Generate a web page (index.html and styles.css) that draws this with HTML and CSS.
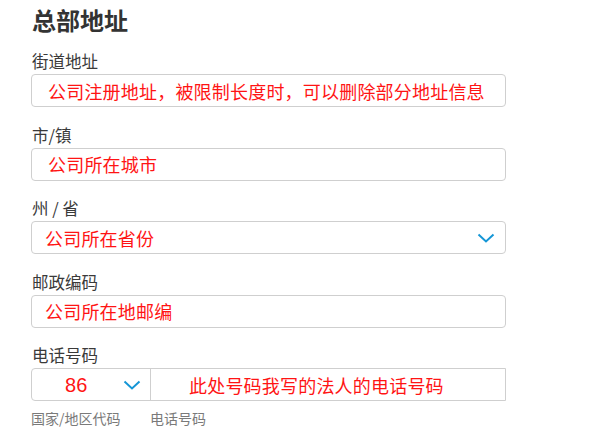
FILE: index.html
```html
<!DOCTYPE html>
<html lang="zh-CN">
<head>
<meta charset="utf-8">
<link rel="stylesheet" href="styles.css">
</head>
<body>
<div class="form">
  <h1 class="title">总部地址</h1>

  <div class="group">
    <div class="label">街道地址</div>
    <div class="box pad16"><span class="val">公司注册地址，被限制长度时，可以删除部分地址信息</span></div>
  </div>

  <div class="group">
    <div class="label">市/镇</div>
    <div class="box pad16"><span class="val">公司所在城市</span></div>
  </div>

  <div class="group">
    <div class="label">州 / 省</div>
    <div class="box pad13 select">
      <span class="val">公司所在省份</span>
      <svg class="chev" width="18" height="10" viewBox="0 0 18 10"><path d="M1.5 1.5 L9 8.5 L16.5 1.5" fill="none" stroke="#1596d6" stroke-width="2"/></svg>
    </div>
  </div>

  <div class="group">
    <div class="label">邮政编码</div>
    <div class="box pad13"><span class="val">公司所在地邮编</span></div>
  </div>

  <div class="group">
    <div class="label">电话号码</div>
    <div class="phone">
      <div class="cc">
        <span class="val num">86</span>
        <svg class="chev" width="18" height="10" viewBox="0 0 18 10"><path d="M1.5 1.5 L9 8.5 L16.5 1.5" fill="none" stroke="#1596d6" stroke-width="2"/></svg>
      </div>
      <div class="tel"><span class="val">此处号码我写的法人的电话号码</span></div>
    </div>
    <div class="subs">
      <span class="sub cc-sub">国家/地区代码</span>
      <span class="sub">电话号码</span>
    </div>
  </div>
</div>
</body>
</html>
```

FILE: styles.css
```css
* { box-sizing: border-box; }
html, body { margin: 0; padding: 0; background: #fff; }
body {
  font-family: "Noto Sans CJK SC", "Noto Sans", sans-serif;
  color: #333;
}
.form {
  width: 475px;
  margin-left: 31px;
  padding-top: 5px;
}
.title {
  margin: 0 0 0 1px;
  font-size: 24px;
  line-height: 30px;
  font-weight: 700;
  color: #333;
}
.group { margin-top: 16px; }
.group + .group { margin-top: 17.5px; }
.label {
  font-size: 16.5px;
  line-height: 20px;
  color: #3a3a3a;
  padding-left: 1px;
  margin-bottom: 3px;
}
.box {
  height: 33px;
  border: 1px solid #cfcfcf;
  border-radius: 4px;
  display: flex;
  align-items: center;
}
.pad16 { padding-left: 16px; }
.pad13 { padding-left: 13px; }
.val {
  font-size: 18px;
  line-height: 24px;
  color: #ff1414;
  letter-spacing: 0.2px;
  white-space: nowrap;
}
.select { justify-content: space-between; padding-right: 10px; }
.chev { display: block; }
.phone {
  height: 33px;
  display: flex;
  border: 1px solid #cfcfcf;
  border-radius: 4px 0 0 4px;
}
.cc {
  width: 119px;
  border-right: 1px solid #cfcfcf;
  display: flex;
  align-items: center;
  padding-left: 33px;
  padding-right: 9px;
  justify-content: space-between;
}
.num { font-family: "Liberation Sans", "Noto Sans", sans-serif; font-size: 20px; }
.tel {
  flex: 1;
  display: flex;
  align-items: center;
  padding-left: 38px;
}
.subs {
  display: flex;
  margin-top: 8px;
}
.sub {
  font-size: 14px;
  line-height: 18px;
  color: #7a7a7a;
}
.cc-sub { width: 119px; }
```
